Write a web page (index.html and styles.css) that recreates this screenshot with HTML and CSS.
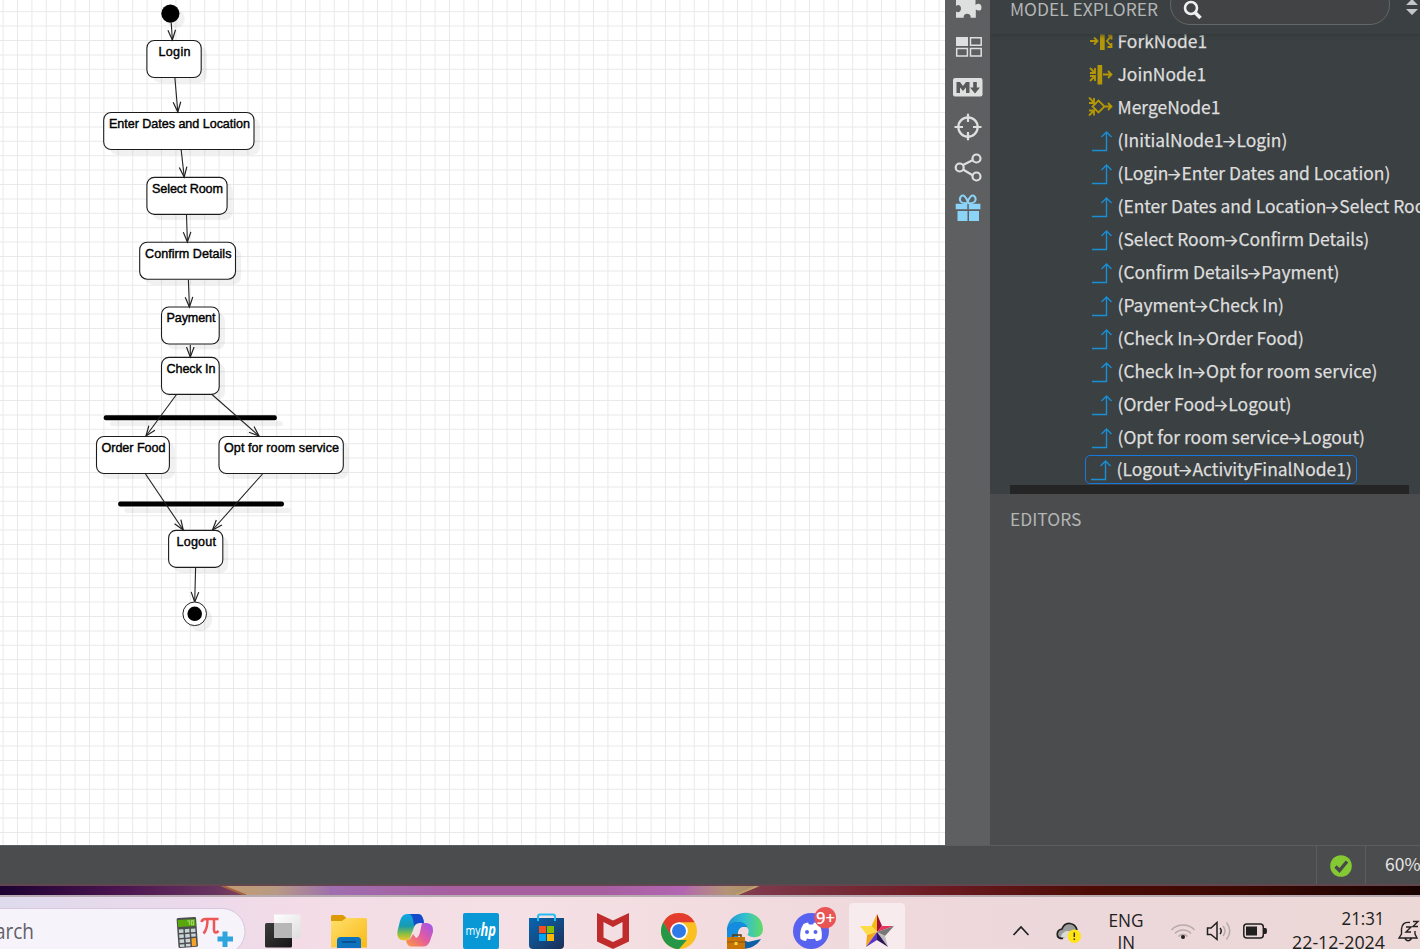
FILE: index.html
```
<!DOCTYPE html>
<html lang="en">
<head>
<meta charset="utf-8">
<title>Activity Diagram</title>
<link rel="stylesheet" href="styles.css">
</head>
<body>
<svg width="0" height="0" class="defs">
  <defs>
    <symbol id="flow" viewBox="0 0 22 22"><path d="M1 20.5H15.5V3M10.5 7l5-5 5 5" fill="none" stroke="#188fd6" stroke-width="1.4"/></symbol>
    <marker id="arrow" markerWidth="14" markerHeight="12" refX="10.5" refY="5" orient="auto" markerUnits="userSpaceOnUse"><path d="M0.500 1.200L10.500 5L0.500 8.800" fill="none" stroke="#222" stroke-width="1.200"/></marker>
  </defs>
</svg>
<div class="app">
  <main class="workspace">
    <section class="canvas">
      <svg class="diagram" width="945" height="845">
        <path class="grid" d="M2.6 422.5H945" stroke-width="845" stroke-dasharray="1 13.4"/>
        <path class="grid" d="M472.5 11.2V845" stroke-width="945" stroke-dasharray="1 13.4"/>
        <g class="shadow">
          <circle cx="175.6" cy="18.8" r="9.2"/>
          <rect x="152.5" y="46.2" width="54.3" height="36.8" rx="8"/>
          <rect x="109.5" y="118" width="150.5" height="37" rx="8"/>
          <rect x="152.5" y="183" width="80.3" height="37" rx="8"/>
          <rect x="145.2" y="247.7" width="96" height="37" rx="8"/>
          <rect x="167" y="312.5" width="58" height="37" rx="8"/>
          <rect x="167" y="363" width="58" height="37" rx="8"/>
          <rect x="102" y="442" width="73" height="37" rx="8"/>
          <rect x="224.5" y="442" width="124" height="37" rx="8"/>
          <rect x="174" y="536" width="54.3" height="37" rx="8"/>
          <rect x="110" y="421.2" width="173" height="5" rx="2.5"/>
          <rect x="124.5" y="508" width="166" height="5" rx="2.5"/>
          <circle cx="200.2" cy="619.2" r="12"/>
        </g>
        <circle cx="170.4" cy="13.6" r="9.1"/>
        <g class="node">
          <rect x="146.9" y="40.5" width="54.3" height="37" rx="7.5"/>
          <rect x="103.7" y="112.5" width="150.3" height="37" rx="7.5"/>
          <rect x="146.9" y="177.4" width="80.2" height="37" rx="7.5"/>
          <rect x="139.7" y="242.2" width="95.8" height="37" rx="7.5"/>
          <rect x="161.5" y="307" width="57.7" height="37" rx="7.5"/>
          <rect x="161.5" y="357.4" width="57.7" height="37" rx="7.5"/>
          <rect x="96.5" y="436.5" width="72.9" height="37" rx="7.5"/>
          <rect x="219" y="436.5" width="124.3" height="37" rx="7.5"/>
          <rect x="168.6" y="530.4" width="54.2" height="37" rx="7.5"/>
        </g>
        <rect x="103.8" y="415.2" width="173" height="5" rx="2"/>
        <rect x="118.2" y="501.5" width="165.7" height="5" rx="2"/>
        <g class="edge">
          <path d="M171.2 22.5L172.4 40"/><path d="M174.9 78L177.8 112"/>
          <path d="M181.2 150L184.2 177"/><path d="M186.5 215L187.4 242"/>
          <path d="M188.4 280L189.4 307"/><path d="M190.3 345V357"/>
          <path d="M176.5 394.5L146 436"/><path d="M212 394.5L259 436"/>
          <path d="M145.5 474L183.3 530"/><path d="M262.5 474L212.5 530"/>
          <path d="M195.6 568L194.7 602"/>
        </g>
        <circle cx="194.7" cy="613.8" r="11.8" fill="#fff" stroke="#222"/>
        <circle cx="194.7" cy="613.8" r="7.3"/>
        <g class="label">
          <text x="158.5" y="56" textLength="32">Login</text>
          <text x="109" y="128" textLength="141">Enter Dates and Location</text>
          <text x="152" y="193" textLength="71">Select Room</text>
          <text x="145" y="258" textLength="86.5">Confirm Details</text>
          <text x="166.5" y="322" textLength="49">Payment</text>
          <text x="166.5" y="373" textLength="49">Check In</text>
          <text x="101.5" y="452" textLength="64">Order Food</text>
          <text x="224" y="452" textLength="115">Opt for room service</text>
          <text x="176.5" y="546" textLength="39.5">Logout</text>
        </g>
      </svg>
    </section>
    <nav class="toolbar">
      <svg width="45" height="230" viewBox="945 0 45 230" fill="#dedfdf">
        <path d="M956 0H962.5C961 -4 971 -4 969.5 0H975.500V5C978 3 981.500 3.500 981.500 7.500C981.500 11.500 978 11 975.800 9.500V17.800H970.500C972 12.500 962.500 12 963.800 17.800H956V11.500C958 13 961 12 961 8.500C961 5 958 4 956 6Z"/>
        <path d="M956 37h12v9h-12z"/><path d="M970.500 37.800h10.700v7.500h-10.700zM956.700 48.600h10.700v7.500h-10.700zM970.500 48.600h10.700v7.500h-10.700z" fill="none" stroke="#dedfdf" stroke-width="1.5"/>
        <rect x="953" y="78" width="29.500" height="18.500" rx="2"/>
        <path d="M956.500 93V82H960L963 86L966 82H969.500V93H966V87.500L963 91L960 87.500V93ZM973.200 82H976.800V87.500H980L975 93.500L970 87.500H973.200Z" fill="#58595b"/>
        <g fill="none" stroke="#dedfdf" stroke-width="2.200"><circle cx="968" cy="127" r="9.700"/><path d="M968 113.700V122M968 132V140.300M954.500 127H963M973 127H981.500"/>
        <path d="M963 165L973 160M963 169.500L973 175.500"/><circle cx="959.700" cy="167.500" r="4"/><circle cx="976.500" cy="158.500" r="4"/><circle cx="976.500" cy="176.500" r="4"/></g>
        <g fill="#8bd4f7"><path d="M955.700 203.700h11.600v5.500h-11.600zM968.800 203.700h11.600v5.500h-11.600zM957.500 211h10v10h-10zM969 211h10v10h-10z"/><g fill="none" stroke="#8bd4f7" stroke-width="2"><path d="M967.500 203C960 204 959 200 960.500 197C963 193.500 967 197 967.700 203C968.500 197 972.500 193.500 975 197C976.500 200 975.500 204 968 203"/></g></g>
      </svg>
    </nav>
    <aside class="side">
      <section class="explorer">
        <header class="head">
          <span class="title">MODEL EXPLORER</span>
          <span class="search"><svg width="22" height="22"><circle cx="9" cy="8" r="6" fill="none" stroke="#eef0f2" stroke-width="2.600"/><path d="M13 12.500L18.500 18" stroke="#eef0f2" stroke-width="3.500"/></svg></span>
          <svg class="sort" width="14" height="20"><path d="M1 6L7 0L13 6ZM1 10H13L7 16Z" fill="#c4c6c7"/></svg>
        </header>
        <div class="tree">
          <div class="row"><svg class="gold" width="26" height="22"><path d="M2 10H9M6 6.500L9.500 10L6 13.500M24 4L19 10L24 16M20 4.500h3.500v4M23.500 12v4h-4"/><path d="M12 1.500h4.700v17.500h-4.700z" fill="#b39708" stroke="none"/></svg><span>ForkNode1</span></div>
          <div class="row"><svg class="gold" width="26" height="22"><path d="M2 4L7 9M2 17L7 12M7 4v5h-5M2 12h5v5M15 10.500H24M20 7L23.500 10.500L20 14"/><path d="M9.500 1h4.700v19.500h-4.700z" fill="#b39708" stroke="none"/></svg><span>JoinNode1</span></div>
          <div class="row"><svg class="gold" width="26" height="22"><path d="M4.500 9.500L10.500 3.500L16.500 9.500L10.500 15.500ZM16.500 9.500H24M20 6L23.500 9.500L20 13M1 0.500L6 5.500M1 18.500L6 13.500M6 1v5h-5M1 13.500h5v5"/></svg><span>MergeNode1</span></div>
          <div class="row"><svg class="flow"><use href="#flow"/></svg><span>(InitialNode1<i>→</i>Login)</span></div>
          <div class="row"><svg class="flow"><use href="#flow"/></svg><span>(Login<i>→</i>Enter Dates and Location)</span></div>
          <div class="row"><svg class="flow"><use href="#flow"/></svg><span>(Enter Dates and Location<i>→</i>Select Room)</span></div>
          <div class="row"><svg class="flow"><use href="#flow"/></svg><span>(Select Room<i>→</i>Confirm Details)</span></div>
          <div class="row"><svg class="flow"><use href="#flow"/></svg><span>(Confirm Details<i>→</i>Payment)</span></div>
          <div class="row"><svg class="flow"><use href="#flow"/></svg><span>(Payment<i>→</i>Check In)</span></div>
          <div class="row"><svg class="flow"><use href="#flow"/></svg><span>(Check In<i>→</i>Order Food)</span></div>
          <div class="row"><svg class="flow"><use href="#flow"/></svg><span>(Check In<i>→</i>Opt for room service)</span></div>
          <div class="row"><svg class="flow"><use href="#flow"/></svg><span>(Order Food<i>→</i>Logout)</span></div>
          <div class="row"><svg class="flow"><use href="#flow"/></svg><span>(Opt for room service<i>→</i>Logout)</span></div>
          <div class="row selected"><svg class="flow"><use href="#flow"/></svg><span>(Logout<i>→</i>ActivityFinalNode1)</span></div>
        </div>
        <div class="scroll"></div>
      </section>
      <section class="editors"><span class="title">EDITORS</span></section>
    </aside>
  </main>
  <footer class="status">
    <div class="check"><svg width="22" height="22"><circle cx="11" cy="11" r="10.800" fill="#84c833"/><path d="M5.500 11.500L9.500 15.500L17 6.500" fill="none" stroke="#46494a" stroke-width="3.300"/></svg></div>
    <div class="zoom">60%</div>
  </footer>
  <div class="wall"><svg width="1420" height="9" viewBox="0 886 1420 9">
    <defs><linearGradient id="dusk" x2="1"><stop stop-color="#c39b6e"/><stop offset=".5" stop-color="#b89a84"/><stop offset="1" stop-color="#9f72ad"/></linearGradient><linearGradient id="dawn" x2="1"><stop stop-color="#b466b3"/><stop offset=".6" stop-color="#b39573"/><stop offset="1" stop-color="#a98a66"/></linearGradient></defs>
    <path d="M221 886H330V895H247Z" fill="url(#dusk)"/><path d="M223 886L245 895" stroke="#a5643f" stroke-width="2"/>
    <path d="M690 886H760L737 895H680Z" fill="url(#dawn)"/><path d="M757 886L736 895" stroke="#bda06c" stroke-width="2"/>
  </svg></div>
  <div class="taskbar">
    <svg width="1420" height="52" viewBox="0 897 1420 52">
      <defs>
        <linearGradient id="fold" x2="1" y2="1"><stop stop-color="#ffe06d"/><stop offset="1" stop-color="#f9b916"/></linearGradient>
        <linearGradient id="cpa" x2="0" y2="1"><stop stop-color="#11a5e9"/><stop offset=".45" stop-color="#169bb0"/><stop offset=".75" stop-color="#8cbf3e"/><stop offset="1" stop-color="#f0c52e"/></linearGradient>
        <linearGradient id="cpb" x1="1" x2="0" y2="1"><stop stop-color="#9a55f3"/><stop offset=".5" stop-color="#e35c9f"/><stop offset="1" stop-color="#ff9b3b"/></linearGradient>
        <linearGradient id="shop" x2="1" y2="1"><stop stop-color="#0867b3"/><stop offset="1" stop-color="#1c2f57"/></linearGradient>
        <linearGradient id="edge" x2="1"><stop stop-color="#2193d8"/><stop offset=".5" stop-color="#33c0cf"/><stop offset="1" stop-color="#63db62"/></linearGradient>
        <linearGradient id="task" x1="0" x2="1" y1="0" y2="1"><stop stop-color="#3c3c3c"/><stop offset="1" stop-color="#151515"/></linearGradient>
        <linearGradient id="pane" x2="1" y2="1"><stop stop-color="#fff"/><stop offset="1" stop-color="#dedede"/></linearGradient>
      </defs>
      <rect x="-40" y="908.500" width="285" height="46" rx="23" fill="#f7f3fa" stroke="#d9c8dc"/>
      <text class="ui" x="-5" y="939" font-size="21" fill="#606066" textLength="39" lengthAdjust="spacingAndGlyphs">arch</text>
      <g transform="rotate(-4 187 932)"><rect x="177.500" y="917.500" width="19.500" height="30" rx="1.500" fill="#4c4d50"/><rect x="178.500" y="919.500" width="17.500" height="7" fill="#58a80d"/><path d="M188 921h2v4M192 921h2v4h-2z" fill="none" stroke="#a7dc72"/>
      <path d="M179 929h4.500v3.500h-4.500zM185 929h4.500v3.500h-4.500zM191 929h4.500v3.500h-4.500zM179 934h4.500v3.500h-4.500zM185 934h4.500v3.500h-4.500zM191 934h4.500v3h-4.500zM179 939h4.500v3.500h-4.500zM185 939h4.500v3.500h-4.500zM179 944h4.500v2.500h-4.500zM185 944h4.500v2.500h-4.500z" fill="#c9d4d6"/><path d="M191 938.500h4.500v8h-4.500z" fill="#f3a32c"/></g>
      <path d="M201.500 922Q202 919 206 919H218.500M207.500 919C207.500 927 206 931 203.500 933.500M214 919V930Q214.500 934.500 218.500 931" fill="none" stroke="#ee5555" stroke-width="2.500"/>
      <path d="M225 931.500v15.500M217.500 939h15.500" stroke="#2fa5dd" stroke-width="5"/>
      <rect x="265" y="923" width="27" height="24.500" rx="1.500" fill="url(#task)"/><rect x="274" y="914.500" width="26.500" height="23.500" rx="1" fill="url(#pane)"/><path d="M274 923h18v15h-18z" fill="#b7b7b7"/>
      <path d="M331 916.500Q331 915 332.500 915H343L347 918.500L341 923H331Z" fill="#dc9a05"/><path d="M331 921H342L346 918H365.500Q367 918 367 919.500V947.500H331Z" fill="url(#fold)"/><path d="M337 948V940.500Q337 937 340.500 937H357.500Q361 937 361 940.500V948Z" fill="#0d72bd"/><path d="M342 942h14" stroke="#064884" stroke-width="1.500"/>
      <path d="M407 914H418.500Q422 914 423.500 920L424 923H419Q415 923 413 930L410.500 937Q409 940.500 404 940.500Q396 940 397.500 931L400 921Q402 914 407 914Z" fill="url(#cpa)"/><path d="M409 914H418.500Q422 914 423.500 920L424 923H420Q415.500 923 414 926Q413 914 409 914Z" fill="#164acb"/>
      <path d="M422 923H427Q434 924 433 932L430 941Q428 946.500 423 946.500H411Q407 946 406 940.500Q410 940 412 936L413 934L416 938Q419 937 420 932Z" fill="url(#cpb)"/>
      <rect x="463" y="913" width="36" height="36" rx="2" fill="#0798d5"/><text class="ui" x="465.500" y="935" font-size="12.500" fill="#fff" textLength="15" lengthAdjust="spacingAndGlyphs">my</text><text class="ui" x="480.500" y="935.500" font-size="17" font-weight="700" font-style="italic" fill="#fff" textLength="15.500" lengthAdjust="spacingAndGlyphs">hp</text>
      <path d="M529 918H564V945Q564 949 560 949H533Q529 949 529 945Z" fill="url(#shop)"/><path d="M538 921V916.500Q538 914.500 540 914.500H553Q555 914.500 555 916.500V921" fill="none" stroke="#24bdf1" stroke-width="2"/><path d="M539 926h7v7h-7z" fill="#f25022"/><path d="M547 926h7v7h-7z" fill="#7fba00"/><path d="M539 934h7v7h-7z" fill="#00a4ef"/><path d="M547 934h7v7h-7z" fill="#ffb900"/>
      <path fill-rule="evenodd" d="M597 913L613 920.500L629 913V941.500L613 949L597 941.500ZM603.500 922V937.500L613 942L622.500 937.500V922L613 927Z" fill="#c02c2c"/>
      <circle cx="679" cy="931" r="18" fill="#fac022"/><path d="M663.300 922.200A18 18 0 0 1 694.700 922.200H679L671 936Z" fill="#e33b2e"/><path d="M663.300 922.200L671.200 935.500L679 940H686.800L679 949A18 18 0 0 1 663.300 922.200Z" fill="#269647"/><circle cx="679" cy="931" r="8.800" fill="#fff"/><circle cx="679" cy="931" r="7" fill="#2d7ae8"/>
      <path d="M727 928C730 908 762 907 763 929C763 938 753 939 747.500 935C751 929 746 925 742 927C735 930 737 944 749 945C743 949 727 949 727 928Z" fill="url(#edge)"/><path d="M727 930C730 921 742 919 747 927C738 924 735 934 739 938L748 942L761 939C755 949 743 950 737 948L727 936Z" fill="#0e5fa6"/><path d="M727 930C731 920 743 920 747 926C738 926 736 931 738 937H727Z" fill="#148cdf"/>
      <path d="M733 938v-3h8v3" fill="none" stroke="#643705" stroke-width="1.500"/><rect x="727" y="937" width="18" height="12" fill="#c77606"/><path d="M727 942h18" stroke="#855009"/><rect x="734.500" y="942" width="3" height="3" fill="#ffd246"/>
      <circle cx="811" cy="931" r="18" fill="#5763ef"/><path d="M800.500 939Q799 931 803.500 924Q806 922.500 808 922.500L809 924.500H813L814 922.500Q817 922.500 819 924Q823 931 821.500 939Q818 941.500 816 941L815 938.500Q811 939.500 807 938.500L806 941Q803 941 800.500 939Z" fill="#fff"/><circle cx="807" cy="932" r="2" fill="#5763ef"/><circle cx="815.500" cy="932" r="2" fill="#5763ef"/><circle cx="825.200" cy="917.700" r="10.800" fill="#e95454"/><text class="ui" x="816" y="923.500" font-size="15.500" font-weight="600" fill="#fff" textLength="19" lengthAdjust="spacingAndGlyphs">9+</text>
      <rect x="849" y="903" width="56" height="50" rx="4" fill="#f8ebee"/>
      <path d="M877 914L882 926L877 932Z" fill="#a30d3d"/><path d="M877 914L871.500 926L877 932Z" fill="#f4b913"/><path d="M860 926H871.500L877 932L867 935Z" fill="#ffdc45"/><path d="M894 926H882L877 932Z" fill="#e93660"/><path d="M894 926L877 932L885 936Z" fill="#777"/><path d="M885 936L888 947L877 932Z" fill="#bbb"/><path d="M867 935L866 947L877 932Z" fill="#f2a41b"/><path d="M866 947L877 940V932Z" fill="#5c35cb"/><path d="M877 932V940L888 947Z" fill="#2c1655"/>
      <g fill="none" stroke="#202020" stroke-width="1.700"><path d="M1013.500 935L1021 927L1028.500 935"/>
      <path d="M1063 938.500C1055 938.500 1056 930 1062 929C1065 921 1075 922 1077 930" fill="#9b9b9b"/></g><path d="M1061 937C1062 931 1068 930 1073 932V938Z" fill="#dadada"/><circle cx="1074.300" cy="936.300" r="6.700" fill="#ffe313"/><path d="M1074.300 932.500v4.500M1074.300 938.500v1.600" stroke="#333" stroke-width="1.500"/>
      <g class="ui" font-size="17.500" fill="#202020"><text x="1108.500" y="926.500" textLength="35" lengthAdjust="spacingAndGlyphs">ENG</text><text x="1117.500" y="949" textLength="17.500" lengthAdjust="spacingAndGlyphs">IN</text><text x="1341.500" y="925" textLength="43" lengthAdjust="spacingAndGlyphs">21:31</text><text x="1292" y="948.500" textLength="93" lengthAdjust="spacingAndGlyphs">22-12-2024</text></g>
      <g fill="none" stroke="#b8abac" stroke-width="1.500"><path d="M1171.500 930A16 16 0 0 1 1194.500 930M1175 933.500A11 11 0 0 1 1191 933.500M1178.500 936.500A6 6 0 0 1 1187.500 936.500"/><path d="M1223 926Q1227 931 1223 936M1226.500 922.500Q1233 931 1226.500 939.500"/></g><circle cx="1183" cy="937" r="2" fill="#202020"/>
      <g fill="none" stroke="#202020" stroke-width="1.500"><path d="M1207.500 928H1211L1217 922.500V939.500L1211 934.500H1207.500ZM1220 928Q1222.500 931 1220 934"/><rect x="1243.800" y="924" width="19.500" height="14" rx="3"/></g><path d="M1246 926.500h11v9h-11zM1264 928h1.500q1.500 0 1.500 3t-1.500 3h-1.500z" fill="#202020"/>
      <path d="M1410 922.500Q1402 921.500 1401.500 929V934L1399 938H1417L1415 934V931M1405 938.500Q1408 943 1411.500 938.500M1406 927h5l-5 5h5M1413 921.500h5l-5 5h5" fill="none" stroke="#202020" stroke-width="1.400"/>
    </svg>
  </div>
</div>
</body>
</html>
```
FILE: styles.css
```
* { box-sizing: border-box; }
body { margin: 0; overflow: hidden; font-family: "Noto Sans CJK SC", "Noto Sans CJK JP", sans-serif; }
svg { display: block; flex: none; }
.defs { position: absolute; }
.app { width: 1420px; height: 949px; display: flex; flex-direction: column; overflow: hidden; }
.workspace { height: 845px; display: grid; grid-template-columns: 945px 45px 430px; }
.canvas { background: #fff; overflow: hidden; }
.grid { stroke: #e9e9e9; fill: none; }
.shadow { fill: #000; fill-opacity: .055; }
.node { fill: #fff; stroke: #1c1c1c; stroke-width: 1.1; }
.edge { fill: none; stroke: #222; stroke-width: 1.1; }
.edge path { marker-end: url(#arrow); }
.label { font: 12.6px "Liberation Sans", Arial, sans-serif; fill: #000; stroke: #000; stroke-width: .4; }
.toolbar { background: #5e5f61; }
.side { display: flex; flex-direction: column; background: #4b4c4d; overflow: hidden; }
.explorer { height: 494px; background: #3b4042; display: flex; flex-direction: column; flex: none; }
.head { height: 34px; display: flex; padding-left: 20px; flex: none; box-shadow: 0 1px 4px #323638; z-index: 1; background: #3b4042; }
.title { color: #b4b6b6; font-size: 17.4px; font-weight: 400; line-height: 19px; white-space: nowrap; }
.head .title { width: 160px; margin-top: -1px; }
.search { width: 220px; height: 41px; margin-top: -16px; border: 1px solid #626768; border-radius: 20px; background: #424344; padding: 15px 0 0 11px; }
.sort { margin: -1px 0 0 15px; }
.tree { height: 451px; overflow: hidden; flex: none; }
.row { height: 33px; display: flex; align-items: center; padding-left: 98px; color: #dedede; font-size: 17.45px; line-height: 27px; white-space: nowrap; -webkit-text-stroke: .25px #dedede; }
.row:first-child { margin-top: -9px; }
.row span { margin: -2px 0 0 -.5px; }
.row svg { width: 26px; height: 22px; margin-right: 4px; }
.row svg.flow { width: 22px; margin: 0 5px 0 3px; }
.row i { display: inline-block; width: 13px; font: 16px/20px Inter, sans-serif; text-indent: -2px; }
.gold { fill: none; stroke: #b39708; stroke-width: 1.8; }
.selected { height: 29px; width: 272px; margin: 1px 0 0 95px; padding-left: 1px; border: 1px solid #1677df; border-radius: 5px; }
.selected svg.flow { margin-left: 3px; }
.scroll { width: 399px; height: 9px; margin-left: 20px; background: #252525; }
.editors { display: flex; padding: 15px 20px; }
.status { height: 39px; border-top: 1px solid #5b5d5e; background: #4b4c4d; display: flex; justify-content: flex-end; flex: none; }
.check { width: 49px; border-left: 1px solid #5b5d5e; padding: 9px 0 0 13px; }
.zoom { width: 55px; border-left: 1px solid #5b5d5e; padding-left: 19px; color: #e6e6e6; font-size: 17.5px; line-height: 35px; }
.wall { height: 13px; flex: none; border-top: 2px solid #61464f; border-bottom: 2px solid #b9abb2; background: linear-gradient(90deg, #1d0232, #4b1450 120px, #67345f 215px, #81455d 245px, #a06eb0 330px, #a75fa0 450px, #a75fa0 600px, #b466b3 690px, #85404f 735px, #7e3849 765px, #6d1c24 930px, #4c0c05 1090px, #3d0903 1240px, #180302); }
.taskbar { height: 52px; flex: none; background: linear-gradient(90deg, #dedbed, #ecd9eb 200px, #f3dce6 300px, #f4e0e5 520px, #f1dadd 800px, #ecd7db 1050px, #ecd8d6); }
.ui { font-family: "Open Sans", "Noto Sans", sans-serif; }
```
